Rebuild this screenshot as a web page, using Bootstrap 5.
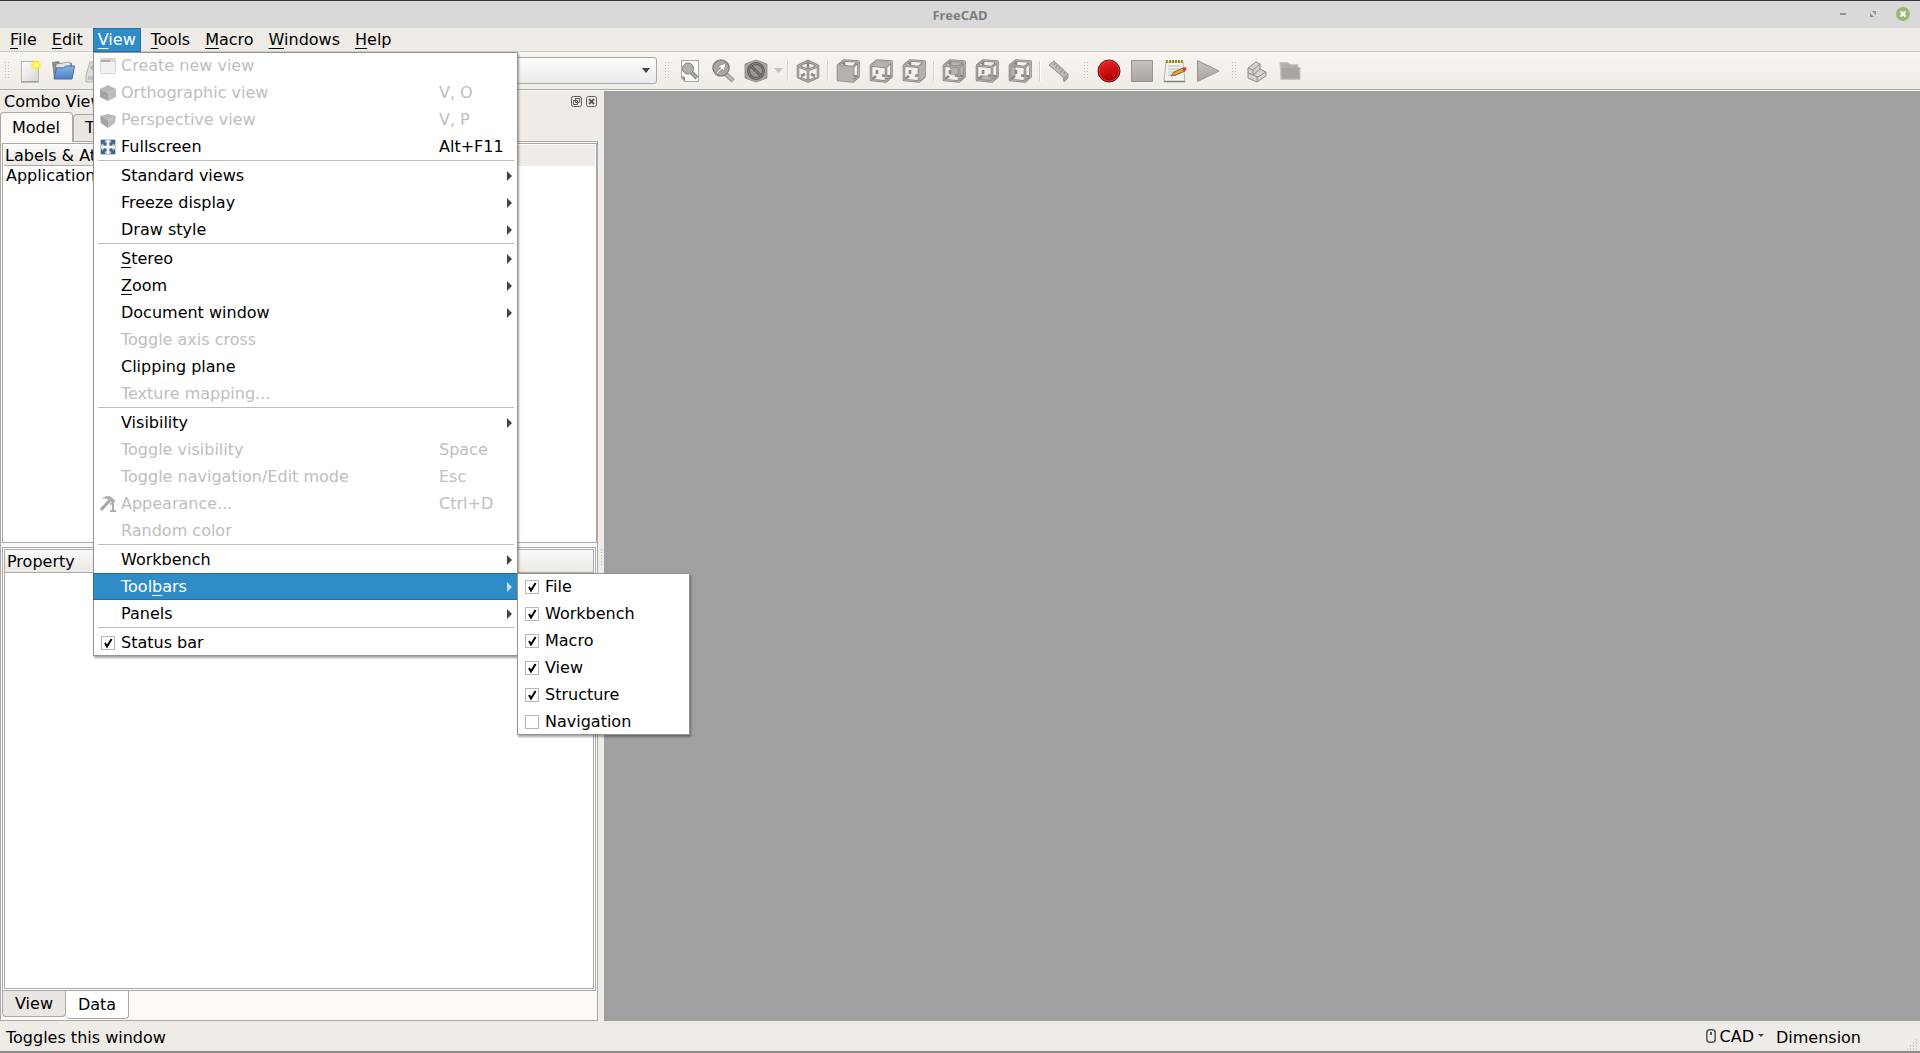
<!DOCTYPE html>
<html lang="en">
<head>
<meta charset="utf-8">
<meta name="viewport" content="width=device-width, initial-scale=1">
<title>FreeCAD</title>
<link rel="stylesheet" href="https://cdn.jsdelivr.net/npm/bootstrap@5.3.0/dist/css/bootstrap.min.css">
<style>
:root{--win:#efebe7;--pane:#fdf9f6;--line:#aca8a5;--hl:#308cc6;--hl-edge:#276f9f;--off:#bebebe}
body{font:16px/24px "DejaVu Sans",sans-serif;color:#000;background:var(--win)}
button{font:inherit;color:inherit}
u{text-underline-offset:3px;text-decoration-thickness:1px}
.titlebar{height:28px;background:#d9d9d9;border-top:1px solid #3a3638;font:700 13px/28px "Noto Sans",sans-serif;color:#7f7f7f}
.titlebar .controls{right:10px;top:6px;gap:16px}
.titlebar button,.dock-btn{background:none;border:0;padding:0;display:flex}
.menubar{height:24px;gap:5px;padding:0 5px;border-bottom:1px solid #cfcbc8}
.menubar-item{border:1px solid transparent;background:none;padding:0 4px;height:24px;line-height:20px}
.menubar-item.show{background:var(--hl);border-color:var(--hl-edge);color:#fff}
.toolbar{height:38px;background:linear-gradient(#f8f5f1,#efebe7);border-bottom:1px solid var(--line)}
.tool{width:33px;height:33px;padding:0;border:0;background:none;display:flex;align-items:center;justify-content:center;flex:none}
.tool-drop{width:12px}
.grip{width:16px;height:18px;flex:none;padding:0 3px 0 8px;background:linear-gradient(90deg,#c2beba 1px,transparent 1px) 0 0/3px 1px;background-origin:content-box;background-clip:content-box;
 -webkit-mask:linear-gradient(#000 1px,transparent 1px) 0 0/1px 3px}
.grip-first{width:13px;padding:0 3px 0 5px}
.rule{width:7px;height:20px;flex:none;display:flex;justify-content:center}
.rule::before{content:"";width:2px;background:#d3cfcc;border-right:1px solid #fff}
.files{width:440px}
.bench{appearance:none;width:217px;height:27px;border:1px solid var(--line);border-radius:3px;padding:0 24px 0 8px;
 background:url("data:image/svg+xml,%3Csvg xmlns='http://www.w3.org/2000/svg' width='8' height='5'%3E%3Cpath d='M0 0h8L4 5z' fill='%23444'/%3E%3C/svg%3E") no-repeat right 6px center,linear-gradient(#fdfcfb,#ecebe9)}
.bench-wrap{width:217px;display:flex}
.work{border-top:1px solid #f6f3f0}
.dock{width:604px;flex:none}
.dock-title{height:21px;padding:0 7px 0 4px;line-height:21px}
.tabs{height:29px}
.tab{border:1px solid var(--line);background:#e9e6e3;padding:0 11px;line-height:22px}
.tab.top{border-radius:4px 4px 0 0;height:27px;border-bottom:0}
.tab.top.active{height:30px;margin-bottom:-1px;line-height:27px;background:var(--pane);z-index:1;padding:0 12px 0 11px}
.tab.bottom{border-radius:0 0 4px 4px;border-top:0;height:26px;padding:0 12px}
.tab.bottom.active{height:28px;line-height:25px;background:#fff;border-left:0}
.frame{margin-right:6px;border:1px solid var(--line);background:var(--pane);padding:1px 0 1px 1px;gap:4px}
.tree{height:400px;flex:none;border:1px solid var(--line);background:#fff;padding:1px;line-height:21px}
.tree-head{height:21px;background:var(--win)}
.tree-head div{width:400px;height:21px;padding-left:1px;border-bottom:1px solid var(--line);background:linear-gradient(#fbf9f7,#ece8e4)}
.tree-row{padding-left:2px;line-height:20px}
.props{border:1px solid var(--line);background:#fff;margin-right:1px;padding:1px}
.props-in{border:1px solid var(--line)}
.props-head{height:23px;border-bottom:1px solid var(--line);background:linear-gradient(#fbf9f7,#ece8e4);padding-left:2px;line-height:24px}
.handle{width:1px;height:18px;right:2px;top:458px;background:linear-gradient(#b9b5b2 1px,transparent 1px) 0 0/1px 3px}
.mdi{background:#a0a0a0}
.status{height:32px;padding:0 59px 0 6px;border-bottom:2px solid #8e8a88;line-height:33px}
.status-btn{background:none;border:0;padding:0}
.sizegrip{right:2px;bottom:1px}
.menu{--bs-dropdown-padding-y:0;--bs-dropdown-min-width:0;--bs-dropdown-border-width:0;--bs-dropdown-border-radius:0;--bs-dropdown-font-size:16px;font-size:16px;background:#fff;
 box-shadow:inset 0 0 0 1px #979391,1px 2px 2px rgba(0,0,0,.35);color:#000}
.menu-view{width:425px;left:93px;top:24px}
.menu-sub{width:173px;left:517px;top:545px}
.item{display:flex;align-items:center;width:100%;height:27px;border:1px solid transparent;background:none;padding:0 5px 0 6px;text-align:left;line-height:25px;margin:0}
.item.active{background:var(--hl);border-color:var(--hl-edge);color:#fff}
.item:disabled{color:var(--off)}
.item .ico{width:21px;flex:none;display:flex}
.item .key{width:73px;flex:none}
.item .arr{flex:none;color:#444}
.item.active .arr{color:#c5dff0}
.divide{height:2px;margin:0 4px 0 5px;border-top:1px solid #bdbab8}
.tick{appearance:none;width:14px;height:14px;margin:0 0 0 1px;border:1px solid #b9b5b2;background:#fff}
.tick:checked{background:#fff url("data:image/svg+xml,%3Csvg xmlns='http://www.w3.org/2000/svg' viewBox='0 0 12 12'%3E%3Cpath d='M3 6l2 3.6L9.6 2' fill='none' stroke='%23000' stroke-width='2'/%3E%3C/svg%3E") center/12px 12px}
.wire{fill:none;stroke:#8d8986;stroke-width:2.6;stroke-linejoin:round}
.wire-in{fill:none;stroke:#bdb9b6;stroke-width:.8;stroke-linejoin:round}
.face{fill:#b5b1ae}
</style>
<script src="https://cdn.jsdelivr.net/npm/bootstrap@5.3.0/dist/js/bootstrap.bundle.min.js"></script>
</head>
<body class="vh-100 d-flex flex-column overflow-hidden">
<svg width="0" height="0" class="position-absolute" aria-hidden="true">
 <defs>
  <symbol id="cage" viewBox="0 0 24 24">
   <path class="wire" d="M2 6.500L17 8V22.500L2 21zM2 6.500L8 1.500L22.500 2.500L17 8M22.500 2.500V17.500L17 22.500M8 1.500V8M8 11V15M2 21L7 17M13 16.500L22.500 17.500"/>
   <path class="wire-in" d="M2 6.500L17 8V22.500L2 21zM2 6.500L8 1.500L22.500 2.500L17 8M22.500 2.500V17.500L17 22.500"/>
  </symbol>
  <symbol id="arrow" viewBox="0 0 5 10"><path d="M0 0v10l5-5z" fill="currentColor"/></symbol>
  <linearGradient id="gFolder" x2="0" y2="1"><stop stop-color="#8db4e2"/><stop offset="1" stop-color="#4a80c4"/></linearGradient>
  <linearGradient id="gRed" x2=".4" y2="1"><stop stop-color="#f42a2a"/><stop offset="1" stop-color="#ad0000"/></linearGradient>
  <linearGradient id="gGray" x2="0" y2="1"><stop stop-color="#c6c2bf"/><stop offset="1" stop-color="#a9a5a2"/></linearGradient>
  <linearGradient id="gPaper" x2="1" y2="1"><stop stop-color="#fff"/><stop offset="1" stop-color="#d4d4d2"/></linearGradient>
  <radialGradient id="gSun"><stop offset=".2" stop-color="#fffbb0"/><stop offset=".5" stop-color="#fcee2c"/><stop offset="1" stop-color="#fcee2c" stop-opacity="0"/></radialGradient>
 </defs>
</svg>

<header class="titlebar position-relative text-center flex-shrink-0">FreeCAD
 <div class="controls position-absolute d-flex align-items-center">
  <button aria-label="Minimize"><svg width="14" height="14"><path d="M4 6h6v2H4z" fill="#929292"/></svg></button>
  <button aria-label="Restore"><svg width="14" height="14"><path d="M6 4h4v4zM4 6l4 4H4zM7 4h3v3zM5 7l2 3" fill="#929292"/></svg></button>
  <button aria-label="Close"><svg width="14" height="14" overflow="visible"><circle cx="7" cy="7" r="7" fill="#9ab87c"/><path d="M4.500 4.500l5 5m0-5l-5 5" stroke="#fff" stroke-width="2"/></svg></button>
 </div>
</header>

<nav class="menubar d-flex position-relative flex-shrink-0" aria-label="Main menu">
 <button class="menubar-item"><u>F</u>ile</button>
 <button class="menubar-item"><u>E</u>dit</button>
 <button class="menubar-item show" aria-expanded="true"><u>V</u>iew</button>
 <button class="menubar-item"><u>T</u>ools</button>
 <button class="menubar-item"><u>M</u>acro</button>
 <button class="menubar-item"><u>W</u>indows</button>
 <button class="menubar-item"><u>H</u>elp</button>

 <div class="dropdown-menu show menu menu-view">
  <button class="item" disabled><span class="ico"><svg width="16" height="16"><rect x=".5" y=".5" width="15" height="15" rx="1" fill="#f3f1ef" stroke="#d5d2cf"/><path d="M1 1h14v3H1z" fill="#d9d6d4"/><path d="M1 2h9v2H1z" fill="#b0acaa"/></svg></span><span class="flex-fill">Create new view</span></button>
  <button class="item" disabled><span class="ico"><svg width="16" height="16"><path d="M8 0l8 4-8 4-8-4z" fill="#b9b6b4"/><path d="M0 4l8 4v8l-8-4z" fill="#a5a2a0"/><path d="M16 4L8 8v8l8-4z" fill="#bfbcba"/></svg></span><span class="flex-fill">Orthographic view</span><span class="key">V, O</span></button>
  <button class="item" disabled><span class="ico"><svg width="16" height="16"><path d="M8 2l8 2-8 4-8-4z" fill="#b9b6b4"/><path d="M0 4l8 4v8l-7-5z" fill="#a5a2a0"/><path d="M16 4L8 8v8l7-5z" fill="#bfbcba"/></svg></span><span class="flex-fill">Perspective view</span><span class="key">V, P</span></button>
  <button class="item"><span class="ico"><svg width="16" height="16"><rect width="16" height="16" rx="1" fill="#c3cbd2"/><path d="M7 1h2v14H7zM1 7h14v2H1z" fill="#f4f4f2"/><path d="M1 1h5L4.500 2.500 7 5 5 7 2.500 4.500 1 6zM15 1h-5l1.500 1.500L9 5l2 2 2.500-2.500L15 6zM1 15h5l-1.500-1.500L7 11 5 9l-2.500 2.500L1 10zM15 15h-5l1.500-1.500L9 11l2-2 2.500 2.500L15 10z" fill="#3d6696"/></svg></span><span class="flex-fill">Fullscreen</span><span class="key">Alt+F11</span></button>
  <div class="divide"></div>
  <button class="item"><span class="ico"></span><span class="flex-fill">Standard views</span><svg class="arr" width="5" height="10"><use href="#arrow"/></svg></button>
  <button class="item"><span class="ico"></span><span class="flex-fill">Freeze display</span><svg class="arr" width="5" height="10"><use href="#arrow"/></svg></button>
  <button class="item"><span class="ico"></span><span class="flex-fill">Draw style</span><svg class="arr" width="5" height="10"><use href="#arrow"/></svg></button>
  <div class="divide"></div>
  <button class="item"><span class="ico"></span><span class="flex-fill"><u>S</u>tereo</span><svg class="arr" width="5" height="10"><use href="#arrow"/></svg></button>
  <button class="item"><span class="ico"></span><span class="flex-fill"><u>Z</u>oom</span><svg class="arr" width="5" height="10"><use href="#arrow"/></svg></button>
  <button class="item"><span class="ico"></span><span class="flex-fill">Document window</span><svg class="arr" width="5" height="10"><use href="#arrow"/></svg></button>
  <button class="item" disabled><span class="ico"></span><span class="flex-fill">Toggle axis cross</span></button>
  <button class="item"><span class="ico"></span><span class="flex-fill">Clipping plane</span></button>
  <button class="item" disabled><span class="ico"></span><span class="flex-fill">Texture mapping...</span></button>
  <div class="divide"></div>
  <button class="item"><span class="ico"></span><span class="flex-fill">Visibility</span><svg class="arr" width="5" height="10"><use href="#arrow"/></svg></button>
  <button class="item" disabled><span class="ico"></span><span class="flex-fill">Toggle visibility</span><span class="key">Space</span></button>
  <button class="item" disabled><span class="ico"></span><span class="flex-fill">Toggle navigation/Edit mode</span><span class="key">Esc</span></button>
  <button class="item" disabled><span class="ico"><svg width="16" height="16"><path d="M1 14L10 4" stroke="#aaa6a3" stroke-width="3"/><path d="M3 2C6 0 10 0 12 2l3 3-2 2-3-3C8 2 5 2 3 2z" fill="#b5b1ae" stroke="#9d9996" stroke-width=".6"/><path d="M10 8l3-1v7m-3 1h6" fill="none" stroke="#b5aca3" stroke-width="2"/></svg></span><span class="flex-fill">Appearance...</span><span class="key">Ctrl+D</span></button>
  <button class="item" disabled><span class="ico"></span><span class="flex-fill">Random color</span></button>
  <div class="divide"></div>
  <button class="item"><span class="ico"></span><span class="flex-fill">Workbench</span><svg class="arr" width="5" height="10"><use href="#arrow"/></svg></button>
  <button class="item active" aria-expanded="true"><span class="ico"></span><span class="flex-fill">Tool<u>b</u>ars</span><svg class="arr" width="5" height="10"><use href="#arrow"/></svg></button>
  <button class="item"><span class="ico"></span><span class="flex-fill">Panels</span><svg class="arr" width="5" height="10"><use href="#arrow"/></svg></button>
  <div class="divide"></div>
  <label class="item"><span class="ico"><input class="tick" type="checkbox" checked></span>Status bar</label>
 </div>
 <div class="dropdown-menu show menu menu-sub">
  <label class="item"><span class="ico"><input class="tick" type="checkbox" checked></span>File</label>
  <label class="item"><span class="ico"><input class="tick" type="checkbox" checked></span>Workbench</label>
  <label class="item"><span class="ico"><input class="tick" type="checkbox" checked></span>Macro</label>
  <label class="item"><span class="ico"><input class="tick" type="checkbox" checked></span>View</label>
  <label class="item"><span class="ico"><input class="tick" type="checkbox" checked></span>Structure</label>
  <label class="item"><span class="ico"><input class="tick" type="checkbox"></span>Navigation</label>
 </div>
</nav>

<div class="toolbar d-flex align-items-center flex-shrink-0" role="toolbar" aria-label="Toolbars">
 <div class="files d-flex align-items-center">
  <span class="grip grip-first"></span>
  <button class="tool" aria-label="New"><svg width="24" height="24"><path d="M3.500 2.500h17v20h-17z" fill="url(#gPaper)" stroke="#b4b4b0"/><path d="M3 23h18" stroke="#8e8e8a"/><circle cx="18" cy="6" r="6" fill="url(#gSun)"/></svg></button>
  <button class="tool" aria-label="Open"><svg width="24" height="24"><path d="M1 3l7-1 1 2h12v16H3z" fill="#8d8d8a"/><path d="M5 5l14-2 1 6H5z" fill="#e4e4e2" stroke="#777" stroke-width=".6"/><path d="M5.500 9h7l2-2h9L21 20H3z" fill="url(#gFolder)" stroke="#3f6fae"/></svg></button>
  <button class="tool" aria-label="Save"><svg width="24" height="24"><path d="M6 3h12l4 13v7H2v-7z" fill="#dedbd8" stroke="#b5b1ae"/><path d="M12 14l-6-6h3c0-4 2-5 5-5" fill="#c9c5c2" stroke="#a9a5a2"/><path d="M4 17h16v4H4z" fill="#c4c0bd"/></svg></button>
 </div>
 <div class="bench-wrap"><select class="bench" aria-label="Workbench"><option></option></select></div>
 <span class="grip"></span>
 <button class="tool" aria-label="Fit all"><svg width="24" height="24"><path d="M3.500 1.500h17v21H7l-3.500-3z" fill="#faf9f8" stroke="#aaa6a3"/><path d="M3 17l4 1v5z" fill="#918d8a"/><path d="M13 13l6 6" stroke="#85817e" stroke-width="4"/><path d="M13 13l6 6" stroke="#bdb9b6" stroke-width="1.500"/><circle cx="10" cy="9.500" r="5.500" fill="#b3afac" stroke="#85817e"/></svg></button>
 <button class="tool" aria-label="Fit selection"><svg width="24" height="24"><path d="M13 13l9 9" stroke="#8d8986" stroke-width="4.500"/><path d="M13 13l8.500 8.500" stroke="#bdb9b6" stroke-width="2.500"/><circle cx="10" cy="9" r="8" fill="#aaa6a3" stroke="#85817e" stroke-width="1.500"/><path d="M5 14l5-5-3-2 8-3-2 8-2-2-5 5z" fill="#fff" stroke="#85817e" stroke-width=".6"/></svg></button>
 <button class="tool" aria-label="Draw style"><svg width="24" height="24"><path d="M12 1l11 4v14l-11 4L1 19V5z" fill="#a5a19e" stroke="#989491"/><circle cx="12" cy="12" r="7.500" fill="#9b9794" stroke="#5e5b59" stroke-width="3"/><circle cx="12" cy="12" r="7.500" fill="none" stroke="#8b8785"/><path d="M7 7l10 10" stroke="#5e5b59" stroke-width="3"/><path d="M7 7l10 10" stroke="#8b8785"/></svg></button>
 <button class="tool tool-drop" aria-label="Draw style options"><svg width="9" height="5"><path d="M0 0h9L4.500 5z" fill="#c5c1be"/></svg></button>
 <span class="rule"></span>
 <button class="tool" aria-label="Isometric"><svg width="24" height="24"><path class="wire" d="M12 2l10 5v11l-10 4.500L2 18V7zM2 7l10 4 10-4M12 11v11M12 2v7M5 17l4-2M19 17l-4-2"/><path class="wire-in" d="M12 2l10 5v11l-10 4.500L2 18V7zM2 7l10 4 10-4M12 11v11"/></svg></button>
 <span class="rule"></span>
 <button class="tool" aria-label="Front"><svg width="24" height="24"><use href="#cage"/><path class="face" d="M2 7l15 1.500v14L2 21z"/></svg></button>
 <button class="tool" aria-label="Top"><svg width="24" height="24"><use href="#cage"/><path class="face" d="M3 6.500l5-4.500 14 1-5 4.500z"/></svg></button>
 <button class="tool" aria-label="Right"><svg width="24" height="24"><use href="#cage"/><path class="face" d="M17.500 8l4.500-4v13.500l-4.500 4z"/></svg></button>
 <span class="rule"></span>
 <button class="tool" aria-label="Rear"><svg width="24" height="24"><path class="face" d="M8 2l14 1v14.500L8 16z"/><use href="#cage"/></svg></button>
 <button class="tool" aria-label="Bottom"><svg width="24" height="24"><path class="face" d="M2 21l6-5 14 1.500-5 5z"/><use href="#cage"/></svg></button>
 <button class="tool" aria-label="Left"><svg width="24" height="24"><path class="face" d="M2 7l6-5v14l-6 5z"/><use href="#cage"/></svg></button>
 <span class="rule"></span>
 <button class="tool" aria-label="Measure"><svg width="24" height="24"><path d="M1 6l5-4 14 13v4l-4 4-1-5z" fill="#bfbbb8" stroke="#989491"/><path d="M15 18l5-3v4l-4 4z" fill="#a5a19e"/><path d="M7 4l-1 2M9.500 6l-2 3M12 8l-1 2M14.500 10.500l-2 3M17 13l-1 2" stroke="#85817e"/></svg></button>
 <span class="grip"></span>
 <button class="tool" aria-label="Record macro"><svg width="24" height="24"><circle cx="12" cy="12" r="11" fill="url(#gRed)" stroke="#5c1010"/><circle cx="12" cy="12" r="10" fill="none" stroke="#ee3c3c" stroke-width=".8"/></svg></button>
 <button class="tool" aria-label="Stop macro"><svg width="24" height="24"><path d="M1.500 1.500h21v21h-21z" fill="url(#gGray)" stroke="#989491"/></svg></button>
 <button class="tool" aria-label="Macros"><svg width="24" height="24"><path d="M3 3h17l2 19.500H1z" fill="#f3f3f1" stroke="#b5b5b1"/><path d="M1 22.500h21" stroke="#85857f" stroke-width="1.500"/><path d="M3 2.500h17" stroke="#a08c1c" stroke-width="3" stroke-dasharray="2 1"/><path d="M5 7h12M5 10h12M5 13h8M5 16h4" stroke="#b9b9b6"/><path d="M8 17l3-4 9-4 2 3-9 4z" fill="#e8a33a" stroke="#6b4a14" stroke-width=".8"/><circle cx="21.500" cy="10" r="2" fill="#e23d3d"/></svg></button>
 <button class="tool" aria-label="Execute macro"><svg width="24" height="24"><path d="M1.500 1.500L23 12 1.500 22.500z" fill="url(#gGray)" stroke="#989491"/></svg></button>
 <span class="grip"></span>
 <button class="tool" aria-label="Create part"><svg width="24" height="24"><g fill="#d6d3d0" stroke="#908c89" stroke-linejoin="round"><path d="M3 9l8-6 4 2v5l6 3v4l-9 6-9-4z"/><path d="M3 9l5 2 7-6M8 11v5l5 2 8-5M3 14l5 2 7-6M12 23v-5" fill="none"/></g></svg></button>
 <button class="tool" aria-label="Create group"><svg width="24" height="24"><path d="M2 3.500h8l2 2h8v3h2v12H3z" fill="#b3afac" stroke="#c6c2bf"/><path d="M4 9h17v10H4z" fill="#a8a4a1"/></svg></button>
</div>

<main class="work d-flex flex-fill overflow-hidden">
 <section class="dock d-flex flex-column position-relative" aria-label="Combo View">
  <div class="dock-title d-flex align-items-center">
   <span class="flex-fill">Combo View</span>
   <div class="d-flex gap-1">
    <button class="dock-btn" aria-label="Float"><svg width="11" height="11"><rect x=".5" y=".5" width="10" height="10" rx="2" fill="none" stroke="#5f5c5a"/><path d="M4.500 2.500h4v4h-4zM2.500 4.500h4v4h-4z" fill="#efebe7" stroke="#5f5c5a"/></svg></button>
    <button class="dock-btn" aria-label="Close"><svg width="11" height="11"><rect x=".5" y=".5" width="10" height="10" rx="2" fill="none" stroke="#5f5c5a"/><path d="M3 3l5 5m0-5L3 8" stroke="#5f5c5a" stroke-width="2"/></svg></button>
   </div>
  </div>
  <div class="tabs d-flex align-items-end">
   <button class="tab top active position-relative">Model</button>
   <button class="tab top">Tasks</button>
  </div>
  <div class="frame d-flex flex-column flex-fill">
   <div class="tree">
    <div class="tree-head"><div>Labels &amp; Attributes</div></div>
    <div class="tree-row">Application</div>
   </div>
   <div class="d-flex flex-column flex-fill">
    <div class="props d-flex flex-fill">
     <div class="props-in flex-fill"><div class="props-head">Property</div></div>
    </div>
    <div class="d-flex align-items-start">
     <button class="tab bottom">View</button>
     <button class="tab bottom active">Data</button>
    </div>
   </div>
  </div>
  <div class="handle position-absolute"></div>
 </section>
 <section class="mdi flex-fill" aria-label="Documents"></section>
</main>

<footer class="status d-flex position-relative flex-shrink-0">
 <span class="flex-fill">Toggles this window</span>
 <button class="status-btn d-flex align-items-center me-2"><svg width="10" height="14" class="me-1"><rect x=".8" y=".8" width="8.400" height="12.400" rx="3" fill="none" stroke="#4d555b" stroke-width="1.500"/><path d="M4 3h2v3H4z" fill="#4d555b"/></svg>CAD<svg width="6" height="4" class="ms-1"><path d="M0 0h6L3 3z" fill="#444"/></svg></button>
 <span class="ms-1">Dimension</span>
 <svg class="sizegrip position-absolute" width="11" height="11"><path d="M9 1h1M6 4h1m2 0h1M3 7h1m2 0h1m2 0h1M0 10h1m2 0h1m2 0h1m2 0h1" stroke="#a5a19e"/></svg>
</footer>
</body>
</html>
